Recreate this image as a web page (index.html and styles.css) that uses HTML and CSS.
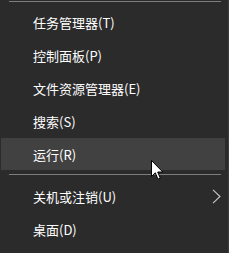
FILE: index.html
```html
<!DOCTYPE html>
<html>
<head>
  <meta charset="utf-8">
  <title>Win+X</title>
  <link rel="stylesheet" href="styles.css">
</head>
<body>
  <div class="menu">
    <div class="separator"></div>
    <ul class="group group-top">
      <li class="item">任务管理器(T)</li>
      <li class="item">控制面板(P)</li>
      <li class="item">文件资源管理器(E)</li>
      <li class="item">搜索(S)</li>
      <li class="item hover">运行(R)</li>
    </ul>
    <div class="separator"></div>
    <ul class="group group-bottom">
      <li class="item">
        <span>关机或注销(U)</span>
        <svg class="chevron" width="9" height="15" viewBox="0 0 9 15">
          <polyline points="1,0.8 8,7.5 1,14.2" fill="none" stroke="#c8c8c8" stroke-width="1.1"/>
        </svg>
      </li>
      <li class="item">桌面(D)</li>
    </ul>

    <svg class="cursor" width="13" height="21" viewBox="0 0 13 21">
      <path d="M0.5,0.5 L0.5,16.5 L4.3,12.8 L7,19.2 L9.3,18.2 L6.7,12 L11.8,12 Z" fill="#fff" stroke="#000" stroke-width="1"/>
    </svg>
  </div>
</body>
</html>
```

FILE: styles.css
```css
* {
  margin: 0;
  padding: 0;
  box-sizing: border-box;
}

body {
  width: 229px;
  height: 253px;
  background-color: #2b2b2b;
  overflow: hidden;
  font-family: "Noto Sans CJK SC", "Noto Sans", sans-serif;
}

/* Context menu */
.menu {
  position: relative;
  width: 229px;
  height: 253px;
  padding-top: 1px;
  background-color: #2b2b2b;
  border-right: 1px solid #3c3c3c;
}

.separator {
  height: 1px;
  margin: 0 7px 0 9px;
  background-color: #7d7d7d;
}

.group {
  list-style: none;
}

.group-top {
  padding-top: 4px;
  padding-bottom: 3px;
}

.group-bottom {
  padding-top: 5px;
}

.item {
  display: flex;
  align-items: center;
  height: 32px;
  margin: 0 3px 1px 1px;
  padding: 0 4px 0 32px;
  font-size: 13px;
  color: #ffffff;
  white-space: nowrap;
}

.item.hover {
  background-color: #414141;
}

.chevron {
  margin-left: auto;
  display: block;
}

/* Mouse pointer over the menu */
.cursor {
  position: absolute;
  left: 151px;
  top: 160px;
}
```
